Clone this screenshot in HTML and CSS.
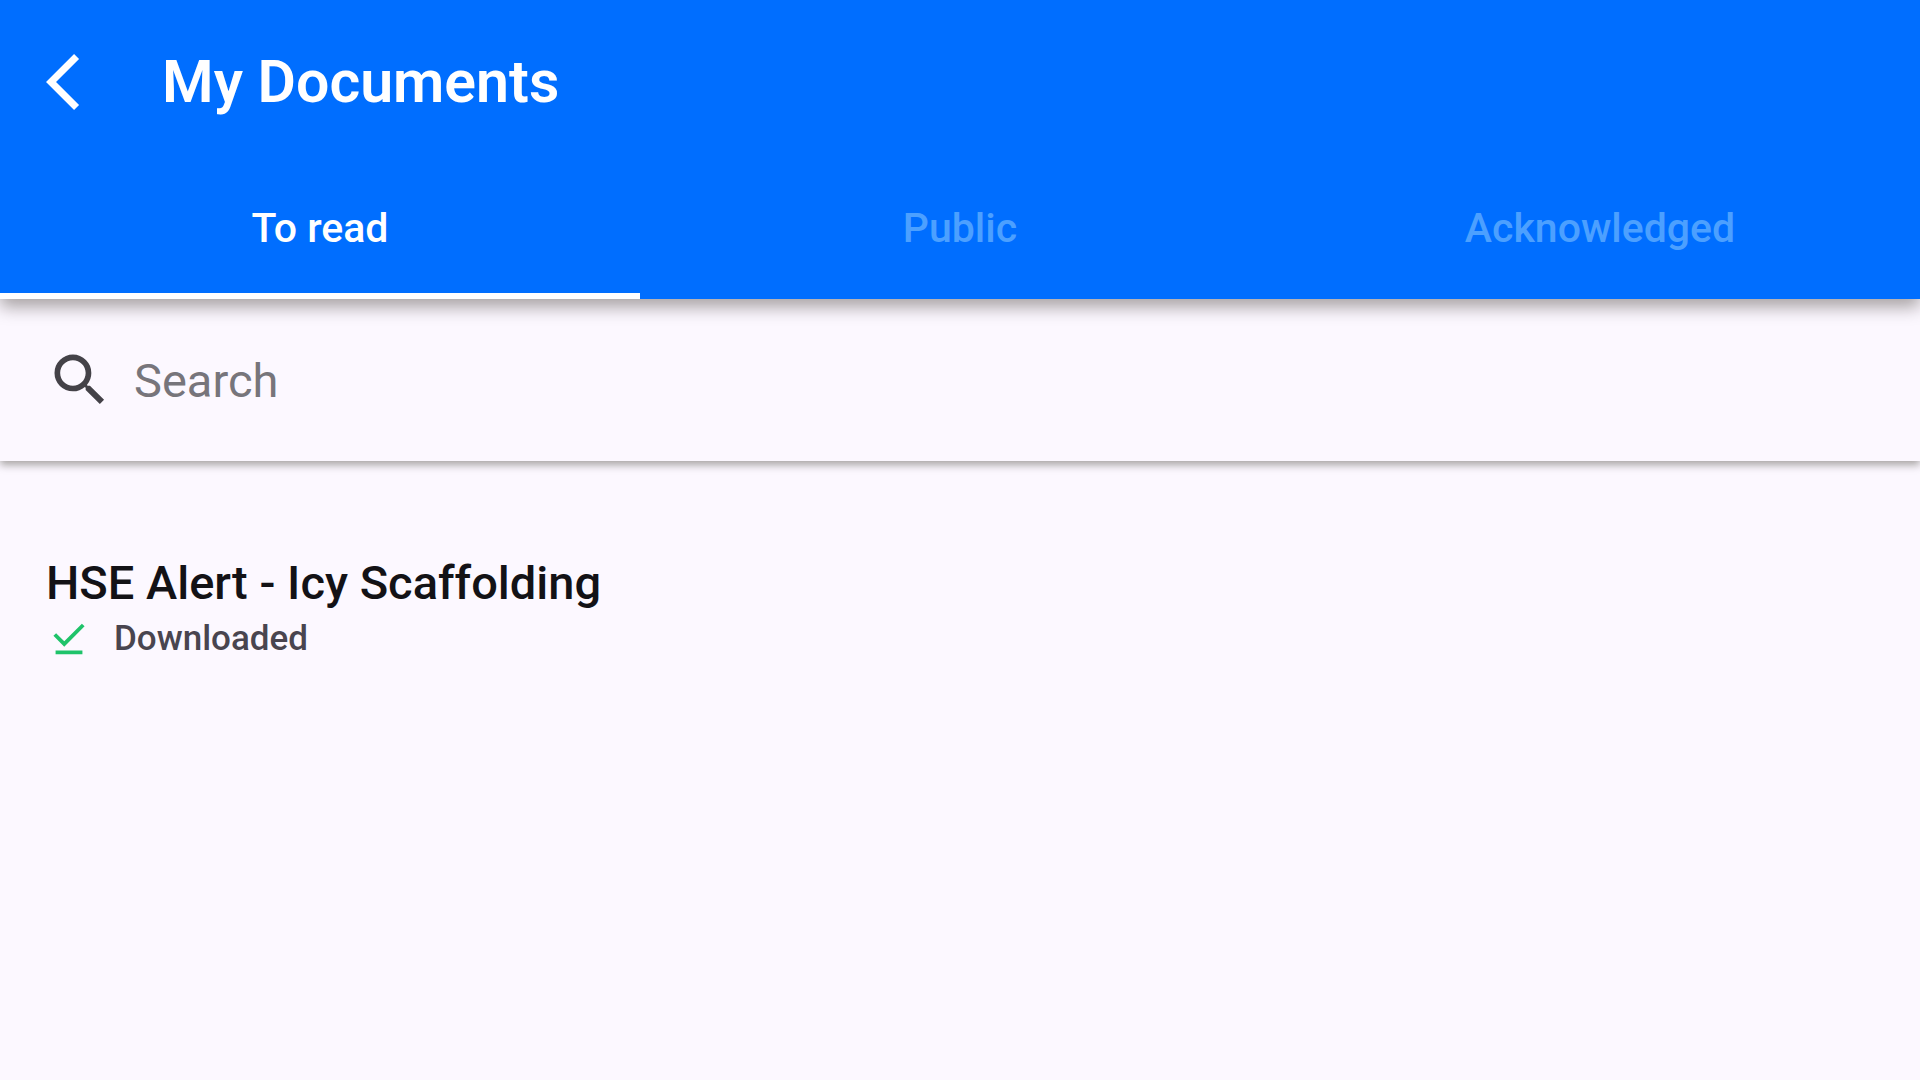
FILE: index.html
```html
<!DOCTYPE html>
<html lang="en">
<head>
  <meta charset="UTF-8">
  <meta name="viewport" content="width=device-width, initial-scale=1.0">
  <title>My Documents</title>
  <link rel="stylesheet" href="styles.css">
</head>
<body>
  <!-- App Bar -->
  <header class="app-bar">
    <div class="toolbar">
      <button type="button" class="back-btn" aria-label="Back">
        <svg viewBox="0 0 24 24" aria-hidden="true"><path d="M11.67 3.87 9.9 2.1 0 12l9.9 9.9 1.77-1.77L3.54 12z"/></svg>
      </button>
      <h1>My Documents</h1>
    </div>
    <nav class="tabs">
      <a href="#to-read" class="tab active" aria-current="page">To read</a>
      <a href="#public" class="tab">Public</a>
      <a href="#acknowledged" class="tab">Acknowledged</a>
    </nav>
  </header>

  <!-- Search -->
  <form class="search-bar" role="search">
    <label for="search" aria-label="Search">
      <svg viewBox="0 0 24 24" aria-hidden="true"><path d="M15.5 14h-.79l-.28-.27A6.471 6.471 0 0 0 16 9.5 6.5 6.5 0 1 0 9.5 16c1.61 0 3.09-.59 4.23-1.57l.27.28v.79l5 4.99L20.49 19l-4.99-5zm-6 0C7.01 14 5 11.99 5 9.5S7.01 5 9.5 5 14 7.01 14 9.5 11.99 14 9.5 14z"/></svg>
    </label>
    <input type="search" id="search" placeholder="Search">
  </form>

  <!-- Document List -->
  <main>
    <ul class="documents" id="to-read">
      <li class="document">
        <h2>HSE Alert - Icy Scaffolding</h2>
        <p class="status">
          <svg viewBox="0 0 24 24" aria-hidden="true"><path d="M20.13 5.41 18.72 4l-9.19 9.19-4.25-4.25-1.41 1.41 5.66 5.66zM5 18h14v2H5z"/></svg>
          <span>Downloaded</span>
        </p>
      </li>
    </ul>
  </main>
</body>
</html>
```
FILE: styles.css
```css
/* General Styles */
* {
  box-sizing: border-box;
}

body {
  margin: 0;
  min-height: 100vh;
  background: #fcf8ff;
  color: #1c1b1f;
  font-family: Roboto, 'Liberation Sans', sans-serif;
}

h1,
h2,
p,
ul {
  margin: 0;
  padding: 0;
}

/* App Bar */
.app-bar {
  position: relative;
  background: #006eff;
  box-shadow: 0 8px 16px rgba(20, 10, 0, 0.36);
}

.toolbar {
  display: flex;
  align-items: center;
  gap: 48px;
  height: 163px;
  padding: 0 46px;
}

.back-btn {
  width: 68px;
  height: 68px;
  padding: 0;
  border: none;
  background: none;
  cursor: pointer;
}

.back-btn svg {
  display: block;
  fill: #fff;
}

h1 {
  color: #fff;
  font-size: 59px;
  font-weight: 600;
}

.tabs {
  display: grid;
  grid-template-columns: repeat(3, 1fr);
}

.tab {
  padding: 42px 0;
  border-bottom: 6px solid transparent;
  color: #4ca0ff;
  font-size: 41px;
  font-weight: 500;
  line-height: 46px;
  text-align: center;
  text-decoration: none;
}

.tab.active {
  border-bottom-color: #fff;
  color: #fff;
}

/* Search */
.search-bar {
  display: flex;
  align-items: center;
  gap: 20px;
  height: 162px;
  padding: 0 46px;
  box-shadow: 0 4px 8px rgba(20, 16, 0, 0.36);
}

.search-bar svg {
  display: block;
  width: 68px;
  height: 68px;
  fill: #444248;
}

.search-bar input {
  flex: 1;
  min-width: 0;
  padding: 0;
  border: none;
  outline: none;
  background: none;
  color: #1c1b1f;
  font: inherit;
  font-size: 47px;
}

.search-bar input::placeholder {
  color: #77757b;
}

/* Document List */
.documents {
  padding: 90px 46px;
  list-style: none;
}

.document h2 {
  color: #131216;
  font-size: 47px;
  font-weight: 500;
  line-height: 64px;
}

.status {
  display: flex;
  align-items: center;
  gap: 22px;
  color: #49454f;
  font-size: 35px;
  font-weight: 500;
  line-height: 48px;
}

.status svg {
  width: 46px;
  height: 46px;
  fill: #1fc36a;
}
```
